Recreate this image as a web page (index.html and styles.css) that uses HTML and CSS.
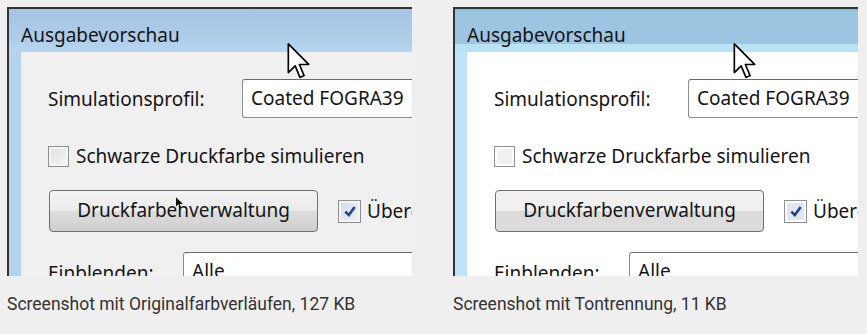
FILE: index.html
```html
<!DOCTYPE html>
<html lang="de">
<head>
    <meta charset="UTF-8">
    <title>Ausgabevorschau – Vergleich</title>
    <link rel="stylesheet" href="styles.css">
</head>
<body>

    <div class="row">
        <!-- Original mit Farbverläufen -->
        <figure class="shot original">
            <div class="win">
                <div class="titlebar">Ausgabevorschau</div>
                <div class="content">
                    <div class="line">
                        <span class="label">Simulationsprofil:</span>
                        <div class="combo">Coated FOGRA39</div>
                    </div>
                    <div class="line check-line">
                        <span class="checkbox"></span>
                        <span>Schwarze Druckfarbe simulieren</span>
                    </div>
                    <div class="line button-line">
                        <div class="button">Druckfarbenverwaltung</div>
                        <span class="checkbox checked">
                            <svg viewBox="0 0 12 12" width="14" height="14"><path d="M2 6.5 L5 9.5 L10 2.5" fill="none" stroke="#23418f" stroke-width="2.2"/></svg>
                        </span>
                        <span>Überdrucken</span>
                    </div>
                    <div class="line last-line">
                        <span class="label short">Einblenden:</span>
                        <div class="combo">Alle</div>
                    </div>
                </div>
            </div>
            <svg class="cursor" viewBox="0 0 12 20" width="23" height="37"><path d="M0.5 0.5 V16 L4.2 12.4 L6.8 18.6 L9 17.6 L6.5 11.6 H11.5 Z" fill="#fff" stroke="#000" stroke-width="0.9" stroke-linejoin="round"/></svg>
            <svg class="mini-cursor" viewBox="0 0 6 10" width="7" height="12"><path d="M0 0 V8 L2 6 L3.5 9.5 L4.5 9 L3.2 5.8 H6 Z" fill="#111"/></svg>
            <figcaption>Screenshot mit Originalfarbverläufen, 127 KB</figcaption>
        </figure>

        <!-- Mit Tontrennung -->
        <figure class="shot posterized">
            <div class="win">
                <div class="titlebar">Ausgabevorschau</div>
                <div class="content">
                    <div class="line">
                        <span class="label">Simulationsprofil:</span>
                        <div class="combo">Coated FOGRA39</div>
                    </div>
                    <div class="line check-line">
                        <span class="checkbox"></span>
                        <span>Schwarze Druckfarbe simulieren</span>
                    </div>
                    <div class="line button-line">
                        <div class="button">Druckfarbenverwaltung</div>
                        <span class="checkbox checked">
                            <svg viewBox="0 0 12 12" width="14" height="14"><path d="M2 6.5 L5 9.5 L10 2.5" fill="none" stroke="#23418f" stroke-width="2.2"/></svg>
                        </span>
                        <span>Überdrucken</span>
                    </div>
                    <div class="line last-line">
                        <span class="label short">Einblenden:</span>
                        <div class="combo">Alle</div>
                    </div>
                </div>
            </div>
            <svg class="cursor" viewBox="0 0 12 20" width="23" height="37"><path d="M0.5 0.5 V16 L4.2 12.4 L6.8 18.6 L9 17.6 L6.5 11.6 H11.5 Z" fill="#fff" stroke="#000" stroke-width="0.9" stroke-linejoin="round"/></svg>
            <figcaption>Screenshot mit Tontrennung, 11 KB</figcaption>
        </figure>
    </div>

</body>
</html>
```

FILE: styles.css
```css
body {
    margin: 0;
    background-color: #efefef;
    font-family: 'Noto Sans', sans-serif;
}

.row {
    display: flex;
    gap: 41px;
    padding: 7px 0 0 7px;
}

/* Ein Screenshot mit Bildunterschrift */
.shot {
    position: relative;
    margin: 0;
    width: 405px;
}
.win {
    height: 267px;
    overflow: hidden;
    border-top: 2px solid #333;
    border-left: 2px solid #333;
    color: #141414;
    font-size: 19px;
}
.titlebar {
    height: 43px;
    box-sizing: border-box;
    padding: 13px 0 0 12px;
    line-height: 26px;
    white-space: nowrap;
}
.content {
    height: 100%;
    margin-left: 12px;
    padding: 27px 0 0 27px;
    white-space: nowrap;
}

/* Zeilen im Dialog */
.line {
    display: flex;
    align-items: center;
}
.label {
    width: 194px;
    flex: none;
}
.label.short {
    width: 135px;
}
.combo {
    flex: none;
    width: 260px;
    height: 37px;
    line-height: 36px;
    padding-left: 8px;
    background-color: #fff;
    border: 1px solid #8c8c8c;
    border-top-color: #6a6a6a;
    border-radius: 3px;
}
.check-line {
    margin-top: 25px;
    gap: 7px;
}
.checkbox {
    flex: none;
    width: 19px;
    height: 19px;
    border: 1px solid #8e8f8f;
    display: flex;
    align-items: center;
    justify-content: center;
}
.checkbox.checked {
    width: 21px;
    height: 21px;
}
.button-line {
    margin-top: 21px;
    margin-left: 1px;
    gap: 6px;
}
.button {
    flex: none;
    width: 267px;
    height: 40px;
    line-height: 38px;
    text-align: center;
    border: 1px solid #707070;
    border-radius: 4px;
    margin-right: 14px;
}
.last-line {
    margin-top: 20px;
    align-items: flex-start;
}
.last-line .label {
    padding-top: 8px;
}

/* Originalfarben mit Verläufen */
.original .win {
    background-color: #b5d3ee;
}
.original .titlebar {
    background: linear-gradient(#a4c4e2, #aecde9 70%, #b8d6f0);
}
.original .content {
    background-color: #f0f0f0;
}
.original .checkbox {
    background: linear-gradient(135deg, #dedede, #f8f8f8);
    box-shadow: inset 0 0 0 2px #f4f4f4;
}
.original .checkbox.checked {
    background: linear-gradient(135deg, #cfd9e6, #f2f5f9);
}
.original .button {
    background: linear-gradient(#f3f3f3, #ebebeb 49%, #dddddd 50%, #cfcfcf);
}

/* Tontrennung: flache Farbflächen */
.posterized .win {
    background-color: #bfe4f8;
}
.posterized .titlebar {
    background: linear-gradient(#7fc3df 0, #7fc3df 2px, #9dc4e0 2px, #9dc4e0 35px, #b9e2f5 35px);
}
.posterized .content {
    background-color: #fff;
}
.posterized .checkbox {
    background-color: #f0f0f0;
    box-shadow: inset 0 0 0 2px #fff;
}
.posterized .checkbox.checked {
    background-color: #dfe6ef;
}
.posterized .button {
    background: linear-gradient(#f0f0f0 50%, #dcdcdc 50%);
}

/* Mauszeiger */
.cursor {
    position: absolute;
    top: 36px;
    left: 280px;
}
.mini-cursor {
    position: absolute;
    top: 190px;
    left: 169px;
}

figcaption {
    margin-top: 18px;
    font-family: Roboto, sans-serif;
    font-size: 17.5px;
    color: #333;
    white-space: nowrap;
}
```
